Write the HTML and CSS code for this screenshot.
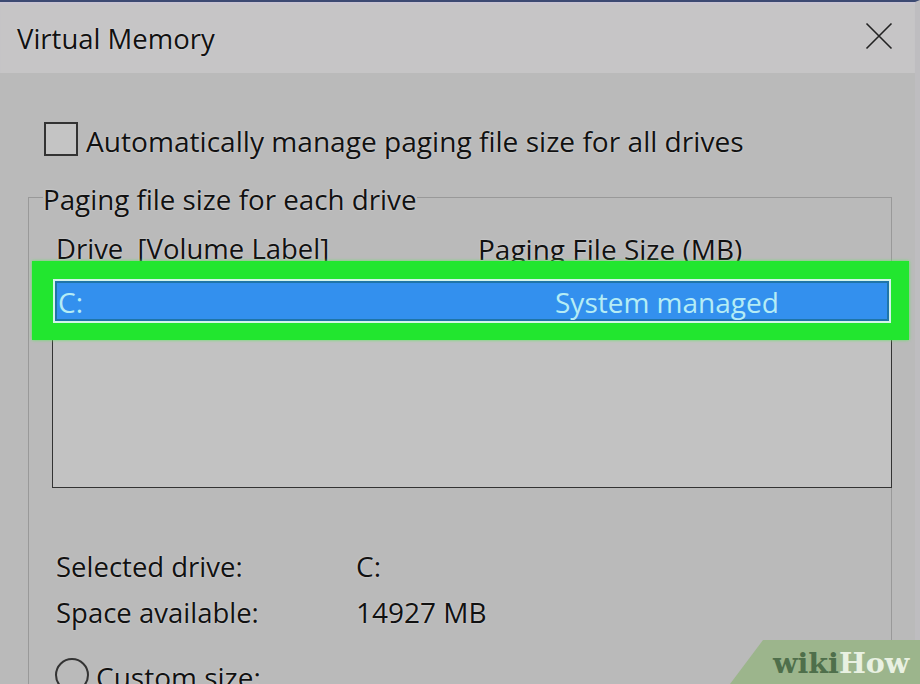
FILE: index.html
```html
<!DOCTYPE html>
<html lang="en">
<head>
    <meta charset="UTF-8">
    <title>Virtual Memory</title>
    <link rel="stylesheet" href="styles.css">
</head>
<body>
    <div class="ventana">
        <div class="titulo">
            <span>Virtual Memory</span>
            <svg class="cerrar" width="28" height="28" viewBox="0 0 28 28">
                <path d="M1.5 1.5 L26.5 26.5 M26.5 1.5 L1.5 26.5" stroke="#222" stroke-width="1.6" fill="none"/>
            </svg>
        </div>

        <div class="contenido">
            <div class="auto">
                <div class="check"></div>
                <span>Automatically manage paging file size for all drives</span>
            </div>

            <fieldset class="grupo">
                <legend>Paging file size for each drive</legend>

                <div class="cabecera">
                    <span class="col1">Drive&nbsp; [Volume Label]</span>
                    <span>Paging File Size (MB)</span>
                </div>

                <div class="lista">
                    <div class="fila">
                        <span class="col-c">C:</span>
                        <span>System managed</span>
                    </div>
                </div>

                <div class="datos">
                    <span>Selected drive:</span><span class="valor">C:</span>
                    <span>Space available:</span><span class="valor">14927 MB</span>
                </div>

                <div class="custom">
                    <div class="radio"></div>
                    <span>Custom size:</span>
                </div>
            </fieldset>
        </div>
    </div>

    <div class="marca"><span class="wiki">wiki</span><span class="how">How</span></div>
</body>
</html>
```

FILE: styles.css
```css
html, body {
    margin: 0;
    height: 684px;
    overflow: hidden;
}

body {
    font-family: "Open Sans", "Noto Sans", sans-serif;
    font-size: 27.5px;
    color: #111;
    background-color: #bababa;
    position: relative;
}

span, legend {
    text-shadow: 0 0 2px rgba(255, 255, 255, 0.55);
}

.ventana {
    height: 684px;
    overflow: hidden;
    border-top: 2px solid #3c4a72;
    border-right: 5px solid #bebdc0;
    box-sizing: border-box;
}

.titulo {
    height: 71px;
    display: flex;
    justify-content: space-between;
    align-items: center;
    padding: 2px 22px 0 17px;
    box-sizing: border-box;
    background-color: #c6c5c6;
    box-shadow: inset 0 3px 2px -1px #c9c4d2;
}

.cerrar {
    margin-top: -5px;
}

.contenido {
    padding-left: 28px;
    width: 864px;
}

.auto {
    display: flex;
    align-items: center;
    gap: 8px;
    margin-top: 50px;
    margin-left: 16px;
    height: 36px;
    font-size: 28.1px;
}

.check {
    width: 30px;
    height: 30px;
    margin-top: -4px;
    border: 2px solid #333;
    background-color: #c4c4c4;
    flex-shrink: 0;
}

.grupo {
    margin: 17px 0 0;
    padding: 0 0 0 23px;
    min-width: 0;
    height: 560px;
    border: 1px solid #999;
    box-sizing: border-box;
}

.grupo legend {
    margin-left: -9px;
    padding: 4px 0 0;
    line-height: 38px;
    font-size: 27.75px;
}

.cabecera {
    display: flex;
    margin-top: 9px;
    height: 54px;
    line-height: 44px;
    padding-left: 4px;
    font-size: 28px;
}

.col1 {
    width: 422px;
    font-size: 27.5px;
}

.lista {
    height: 207px;
    margin-right: -1px;
    border: 1px solid #333;
    border-top: none;
    background-color: #c2c2c2;
    padding: 0 2px;
    box-sizing: border-box;
    position: relative;
    z-index: 1;
    isolation: isolate;
}

.fila {
    position: relative;
    display: flex;
    align-items: center;
    height: 40px;
    box-sizing: border-box;
    background-color: #3390ee;
    border: 2px solid #1f75a8;
    outline: 2px solid #d3f4ea;
    color: #b5ecf5;
    padding: 2px 0 0 1px;
    font-size: 28px;
}

.fila span {
    text-shadow: none;
}

.fila::before {
    content: "";
    position: absolute;
    top: -22px;
    left: -25px;
    right: -22px;
    bottom: -21px;
    background-color: #22e62f;
    box-shadow: 0 0 3px #5fe860;
    z-index: -1;
}

.col-c {
    width: 497px;
}

.datos {
    display: grid;
    grid-template-columns: 300px auto;
    grid-auto-rows: 46px;
    align-items: center;
    margin-top: 55px;
    padding-left: 4px;
}

.valor {
    font-size: 28px;
}

.custom {
    display: flex;
    align-items: center;
    gap: 7px;
    margin-top: 23px;
    margin-left: 3px;
    height: 34px;
    font-size: 28px;
}

.custom span {
    margin-top: 4px;
}

.radio {
    width: 30px;
    height: 30px;
    border: 2px solid #333;
    border-radius: 50%;
    flex-shrink: 0;
}

.marca {
    position: absolute;
    right: 0;
    bottom: 0;
    width: 190px;
    height: 44px;
    box-sizing: border-box;
    padding: 8px 0 0 43px;
    background-color: #9cb58c;
    clip-path: polygon(33px 0, 100% 0, 100% 100%, 0 100%);
    font-family: "DejaVu Serif", serif;
    font-weight: bold;
    font-size: 28.5px;
    line-height: 30px;
    white-space: nowrap;
}

.wiki {
    color: #4f6f4b;
    text-shadow: none;
}

.how {
    color: #e9f1e2;
    text-shadow: none;
}
```
